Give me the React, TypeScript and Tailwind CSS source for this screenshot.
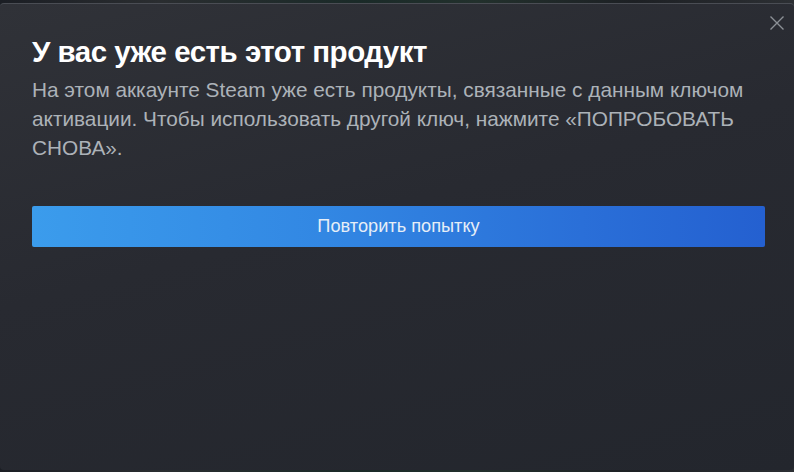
import React from "react";

export default function App() {
  return (
    <div className="w-[794px] h-[472px] overflow-hidden bg-[linear-gradient(90deg,#1b1e24_0%,#2a2d30_20%,#1a2a28_45%,#22302c_60%,#1d2024_80%,#2c2f33_100%)] pt-[3px] pb-[2px]">
      <div className="relative h-full rounded-[4px] border-t border-[#4a4d54] bg-[linear-gradient(165deg,#303238_0%,#282a31_45%,#23262d_100%)] pl-[32px] pr-[29px] pt-[30px]">
        <button className="absolute right-[10px] top-[12px] w-[14px] h-[14px] text-[#8c9096]">
          <svg width="14" height="14" viewBox="0 0 14 14" fill="none">
            <path d="M0.5 0.5 L13.5 13.5 M13.5 0.5 L0.5 13.5" stroke="currentColor" strokeWidth="1.4" />
          </svg>
        </button>
        <h1
          className="text-white font-bold text-[29.5px] leading-[36px] tracking-[-0.5px]"
          style={{ fontFamily: '"Liberation Sans", Arial, sans-serif' }}
        >
          У вас уже есть этот продукт
        </h1>
        <p
          className="mt-[5px] text-[#acb2b8] text-[20.8px] leading-[29px] pr-[10px]"
          style={{ fontFamily: '"Liberation Sans", Arial, sans-serif' }}
        >
          На этом аккаунте Steam уже есть продукты, связанные с данным ключом активации. Чтобы использовать другой ключ, нажмите «ПОПРОБОВАТЬ СНОВА».
        </p>
        <button
          className="mt-[44px] w-full h-[41px] rounded-[2px] bg-[linear-gradient(90deg,#3b9cec_0%,#3287e3_40%,#2a6fd8_75%,#2460d0_100%)] text-[#e6eef7] text-[18.2px]"
          style={{ fontFamily: '"Liberation Sans", Arial, sans-serif' }}
        >
          Повторить попытку
        </button>
      </div>
    </div>
  );
}
